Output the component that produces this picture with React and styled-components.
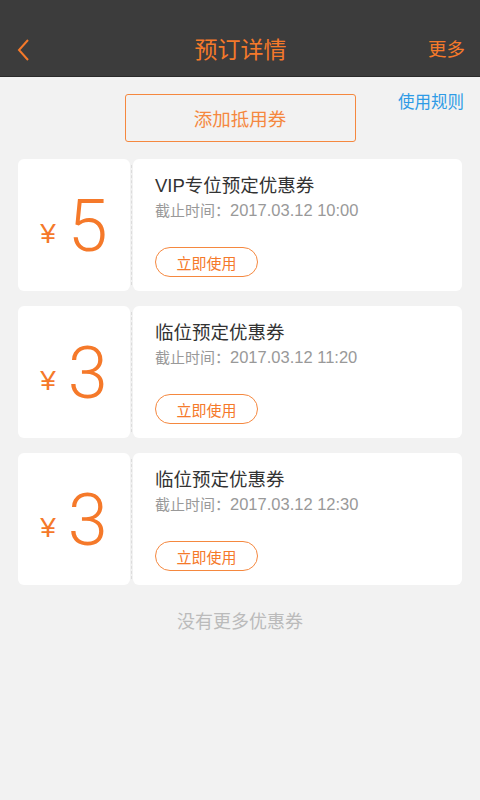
import React from "react";
import styled, { createGlobalStyle } from "styled-components";

const Global = createGlobalStyle`
  html, body { margin: 0; padding: 0; background: #f2f2f2; }
  body { font-family: "Liberation Sans", "Noto Sans CJK SC", sans-serif; }
  * { box-sizing: border-box; }
`;

const ORANGE = "#f5792a";

const Page = styled.div`
  width: 480px;
  min-height: 800px;
  background: #f2f2f2;
`;

const Header = styled.div`
  height: 77px;
  background: #3c3c3c;
  border-bottom: 1px solid #2a2a2a;
  display: flex;
  align-items: flex-end;
  justify-content: space-between;
  padding: 0 15px 12px 16px;
`;

const Back = styled.div`
  width: 40px;
  height: 28px;
  display: flex;
  align-items: center;
`;

const Title = styled.div`
  font-size: 23px;
  color: ${ORANGE};
  line-height: 28px;
  flex: 1;
  text-align: center;
`;

const More = styled.div`
  font-size: 18.5px;
  color: ${ORANGE};
  line-height: 28px;
  width: 40px;
  text-align: right;
`;

const TopRow = styled.div`
  position: relative;
  display: flex;
  justify-content: center;
  padding-top: 17px;
`;

const AddButton = styled.div`
  width: 231px;
  height: 48px;
  border: 1.5px solid #f5883f;
  border-radius: 3px;
  display: flex;
  align-items: center;
  justify-content: center;
  font-size: 18.5px;
  color: #f5883f;
`;

const Rules = styled.div`
  position: absolute;
  right: 16px;
  top: 12px;
  font-size: 16.5px;
  color: #2e9be6;
`;

const List = styled.div`
  display: flex;
  flex-direction: column;
  gap: 15px;
  padding: 17px 18px 0;
`;

const Ticket = styled.div`
  display: flex;
  height: 132px;
`;

const Left = styled.div`
  width: 112px;
  background: #fff;
  border-radius: 6px;
  display: flex;
  align-items: center;
  justify-content: center;
  color: ${ORANGE};
  padding-top: 4px;
`;

const Divider = styled.div`
  width: 3px;
  display: flex;
  justify-content: center;
  padding: 6px 0;
`;

const Dash = styled.div`
  border-left: 1px dashed #dcdcdc;
  height: 100%;
`;

const Yen = styled.span`
  font-size: 28px;
  font-family: "Liberation Sans", sans-serif;
  margin-right: 12px;
  margin-top: 14px;
`;

const Amount = styled.span`
  font-family: Roboto, "Liberation Sans", sans-serif;
  font-weight: 300;
  font-size: 72px;
  line-height: 1;
`;

const Right = styled.div`
  flex: 1;
  background: #fff;
  border-radius: 6px;
  padding: 14px 0 0 22px;
  display: flex;
  flex-direction: column;
  align-items: flex-start;
`;

const Name = styled.div`
  font-size: 18.5px;
  color: #333;
  line-height: 26px;
`;

const Time = styled.div`
  font-size: 15px;
  color: #999;
  line-height: 22px;
`;

const Stamp = styled.span`
  font-size: 16.5px;
`;

const UseButton = styled.div`
  margin-top: 25px;
  width: 103px;
  height: 30px;
  border: 1.5px solid #f5883f;
  border-radius: 15px;
  display: flex;
  align-items: center;
  justify-content: center;
  font-size: 15px;
  color: #f5792a;
`;

const Footer = styled.div`
  text-align: center;
  font-size: 18px;
  color: #bbb;
  padding-top: 22px;
`;

const coupons = [
  { amount: 5, name: "VIP专位预定优惠券", time: "2017.03.12 10:00" },
  { amount: 3, name: "临位预定优惠券", time: "2017.03.12 11:20" },
  { amount: 3, name: "临位预定优惠券", time: "2017.03.12 12:30" },
];

export default function App() {
  return (
    <Page>
      <Global />
      <Header>
        <Back>
          <svg width="14" height="24" viewBox="0 0 14 24">
            <path d="M12 2 L3 12 L12 22" fill="none" stroke={ORANGE} strokeWidth="2" />
          </svg>
        </Back>
        <Title>预订详情</Title>
        <More>更多</More>
      </Header>
      <TopRow>
        <AddButton>添加抵用券</AddButton>
        <Rules>使用规则</Rules>
      </TopRow>
      <List>
        {coupons.map((c, i) => (
          <Ticket key={i}>
            <Left>
              <Yen>¥</Yen>
              <Amount>{c.amount}</Amount>
            </Left>
            <Divider>
              <Dash />
            </Divider>
            <Right>
              <Name>{c.name}</Name>
              <Time>
                截止时间：<Stamp>{c.time}</Stamp>
              </Time>
              <UseButton>立即使用</UseButton>
            </Right>
          </Ticket>
        ))}
      </List>
      <Footer>没有更多优惠券</Footer>
    </Page>
  );
}
